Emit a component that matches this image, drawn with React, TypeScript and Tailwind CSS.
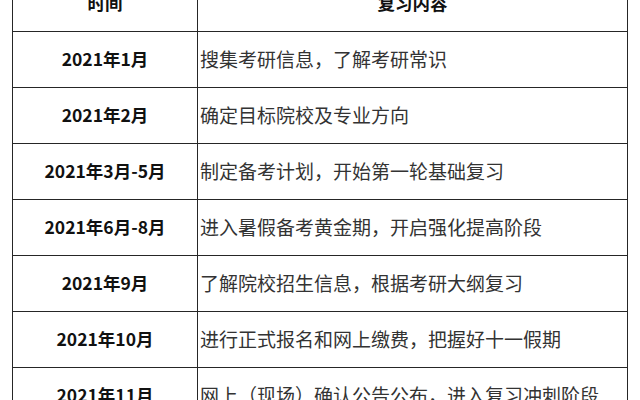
const rows = [
  { time: "2021年1月", content: "搜集考研信息，了解考研常识" },
  { time: "2021年2月", content: "确定目标院校及专业方向" },
  { time: "2021年3月-5月", content: "制定备考计划，开始第一轮基础复习" },
  { time: "2021年6月-8月", content: "进入暑假备考黄金期，开启强化提高阶段" },
  { time: "2021年9月", content: "了解院校招生信息，根据考研大纲复习" },
  { time: "2021年10月", content: "进行正式报名和网上缴费，把握好十一假期" },
  { time: "2021年11月", content: "网上（现场）确认公告公布，进入复习冲刺阶段" },
];

export default function App() {
  return (
    <div
      className="w-[640px] h-[400px] overflow-hidden bg-white"
      style={{ fontFamily: '"Microsoft YaHei", "Noto Sans CJK SC", sans-serif' }}
    >
      <div className="ml-[12px] mt-[-25px] w-[616px]">
        <table className="w-full table-fixed border-collapse">
          <colgroup>
            <col className="w-[185px]" />
            <col />
          </colgroup>
          <thead>
            <tr className="h-[56px]">
              <th className="border-[1.5px] border-[#262626] text-[17.5px] font-bold text-[#111] text-center">
                时间
              </th>
              <th className="border-[1.5px] border-[#262626] text-[17.5px] font-bold text-[#111] text-center">
                复习内容
              </th>
            </tr>
          </thead>
          <tbody>
            {rows.map((r) => (
              <tr key={r.time} className="h-[56px]">
                <td className="border-[1.5px] border-[#262626] text-[17.5px] font-bold text-[#111] text-center whitespace-nowrap">
                  {r.time}
                </td>
                <td className="border-[1.5px] border-[#262626] pl-[2px] text-[19px] text-[#333] whitespace-nowrap">
                  {r.content}
                </td>
              </tr>
            ))}
          </tbody>
        </table>
      </div>
    </div>
  );
}
